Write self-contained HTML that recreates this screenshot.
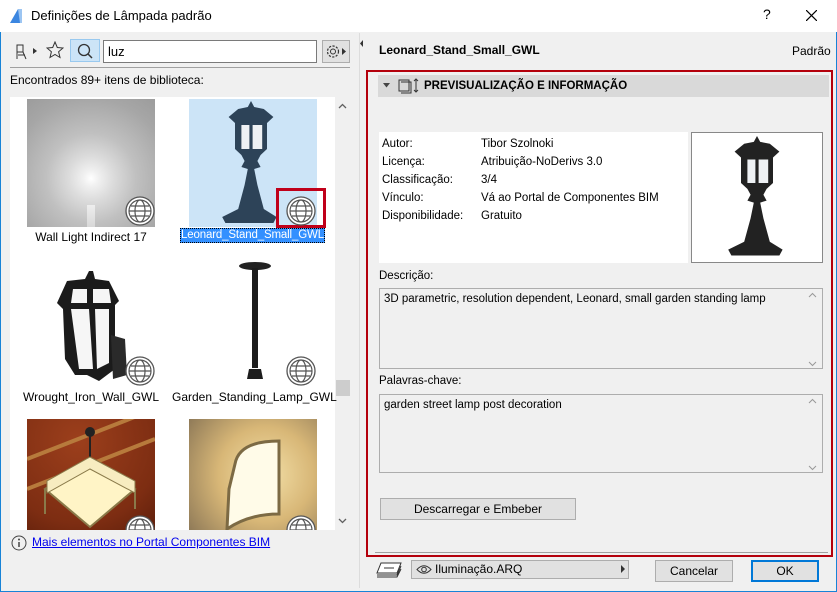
<!DOCTYPE html><html><head><meta charset="utf-8"><style>
*{box-sizing:border-box}body{margin:0;width:837px;height:592px;overflow:hidden;font-family:"Liberation Sans",sans-serif;font-size:12px;color:#000;background:#f0f0f0;position:relative}
.a{position:absolute}
.win{left:0;top:0;width:837px;height:592px;border:1px solid #1883d7;border-top:none}
.title{left:0;top:0;width:837px;height:32px;background:#fff}
.thumb{width:128px;height:128px}
.lbl{font-size:12px;text-align:center;width:162px}
.globe{width:30px;height:30px}
.btn{background:#e1e1e1;border:1px solid #adadad;text-align:center;font-size:12px}
.ta{background:#f0f0f0;border:1px solid #adadad;padding:4px;font-size:11.5px}
</style></head><body>
<div class="a win"></div>
<div class="a title"></div>
<svg class="a" style="left:9px;top:8px" width="14" height="16"><path d="M1 15 L9 1 L13 1 L13 15Z" fill="#3b86e0"/><path d="M9 1 L13 1 L13 15 L11 15Z" fill="#9cc5f2"/></svg>
<div class="a" style="left:31px;top:8px;font-size:13px">Definições de Lâmpada padrão</div>
<div class="a" style="left:763px;top:6px;font-size:14px">?</div>
<svg class="a" style="left:806px;top:10px" width="11" height="11"><path d="M0 0L11 11M11 0L0 11" stroke="#000" stroke-width="1.2"/></svg>
<svg class="a" style="left:15px;top:43px" width="24" height="18"><path d="M2 2 H8 V9 H2Z M2 9 V16 M8 9 L11 16 M3 12 H10" fill="none" stroke="#333" stroke-width="1"/><path d="M18 5 L22 8 L18 11Z" fill="#333"/></svg>
<svg class="a" style="left:46px;top:41px" width="18" height="18"><path d="M9 1 L11.3 6.5 L17 7 L12.6 10.8 L14 16.5 L9 13.5 L4 16.5 L5.4 10.8 L1 7 L6.7 6.5Z" fill="none" stroke="#333"/></svg>
<div class="a" style="left:70px;top:39px;width:30px;height:23px;background:#cce4f7;border:1px solid #99c9ef"></div>
<svg class="a" style="left:77px;top:43px" width="17" height="16"><circle cx="7" cy="7" r="5.5" fill="none" stroke="#333" stroke-width="1.3"/><path d="M11 11 L15 15" stroke="#333" stroke-width="1.5"/></svg>
<div class="a" style="left:103px;top:40px;width:214px;height:23px;background:#fff;border:1px solid #7a7a7a;padding:3px 4px;font-size:13px">luz</div>
<div class="a" style="left:322px;top:40px;width:28px;height:23px;background:#e1e1e1;border:1px solid #adadad"></div>
<svg class="a" style="left:325px;top:43px" width="24" height="18"><circle cx="8" cy="8.5" r="5.5" fill="none" stroke="#333" stroke-width="1.2" stroke-dasharray="2.2 1.4"/><circle cx="8" cy="8.5" r="2.5" fill="none" stroke="#333"/><path d="M17 5 L21 8.5 L17 12Z" fill="#333"/></svg>
<div class="a" style="left:10px;top:67px;width:340px;height:1px;background:#a0a0a0"></div>
<div class="a" style="left:10px;top:73px">Encontrados 89+ itens de biblioteca:</div>
<div class="a" style="left:10px;top:97px;width:325px;height:433px;background:#fff"></div>
<div class="a" style="left:335px;top:97px;width:15px;height:433px;background:#f0f0f0"></div>
<div class="a" style="left:336px;top:380px;width:14px;height:16px;background:#cdcdcd"></div>
<svg class="a" style="left:338px;top:103px" width="9" height="6"><path d="M1 5 L4.5 1.5 L8 5" fill="none" stroke="#606060" stroke-width="1.3"/></svg>
<svg class="a" style="left:338px;top:518px" width="9" height="6"><path d="M1 1 L4.5 4.5 L8 1" fill="none" stroke="#606060" stroke-width="1.3"/></svg>
<svg width="0" height="0" style="position:absolute"><defs>
<g id="lamp"><path d="M30 2 L32 8 L38 10 L44 18 L40 24 L40 50 L36 56 L34 62 L36 68 L32 70 L34 86 L38 110 L46 118 L44 124 L14 124 L12 118 L22 110 L26 86 L28 70 L24 68 L26 62 L24 56 L20 50 L20 24 L16 18 L22 10 L28 8Z"/><path d="M24 26 H29 V50 H24Z M31 26 H37 V50 H31Z" fill="#eef1f4"/></g>
<g id="g"><circle cx="15" cy="15" r="14" fill="#fff" stroke="#555" stroke-width="1.3"/><circle cx="15" cy="15" r="11" fill="none" stroke="#555" stroke-width="1.2"/><ellipse cx="15" cy="15" rx="5" ry="11" fill="none" stroke="#555" stroke-width="1.2"/><path d="M4 15 H26 M6 10 H24 M6 20 H24" stroke="#555" stroke-width="1.2"/></g></defs></svg>
<div class="a thumb" style="left:27px;top:99px;background:radial-gradient(circle at 50% 62%,#fff 0,#f0f0f0 8px,#dcdcdc 22px,#c0c0c0 45px,#a6a6a6 80px,#9c9c9c 100%)"></div>
<div class="a" style="left:87px;top:205px;width:8px;height:22px;background:linear-gradient(#eee,#d8d8d8)"></div>
<div class="a lbl" style="left:10px;top:230px">Wall Light Indirect 17</div>
<div class="a thumb" style="left:189px;top:99px;background:#cce4f7"></div>
<svg class="a" style="left:203px;top:99px" width="96" height="128"><g transform="translate(48 0) scale(1.6 1) translate(-30 0)" fill="#2d4358"><use href="#lamp"/></g></svg>
<div class="a" style="left:180px;top:228px;width:145px;height:15px;background:#3390ff;border:1px dotted #000"></div>
<div class="a" style="left:181px;top:229px;font-size:11.5px;letter-spacing:-0.15px;color:#fff;white-space:nowrap">Leonard_Stand_Small_GWL</div>
<div class="a" style="left:276px;top:188px;width:50px;height:40px;border:3px solid #c0001a"></div>
<svg class="a" style="left:27px;top:259px" width="128" height="128"><path d="M62 12 L66 12 L68 20 L82 22 L92 42 L88 46 L88 110 L72 122 L60 116 L48 116 L38 100 L36 50 L30 44 L40 22 L58 20Z" fill="#1b1b1b"/><path d="M44 50 H62 L66 110 H52Z M46 30 H60 V44 H44Z M66 30 H82 L84 44 H66Z M68 50 H82 L82 104 L70 110Z" fill="#f6f6f6"/><path d="M84 76 L98 80 L100 116 L86 120Z" fill="#2a2a2a"/></svg>
<div class="a lbl" style="left:10px;top:390px">Wrought_Iron_Wall_GWL</div>
<svg class="a" style="left:189px;top:259px" width="128" height="128"><ellipse cx="66" cy="7" rx="16" ry="4" fill="#222"/><rect x="63" y="9" width="6" height="100" fill="#1d1d1d"/><path d="M60 110 H72 L74 120 H58Z" fill="#1d1d1d"/></svg>
<div class="a lbl" style="left:172px;top:390px;width:162px">Garden_Standing_Lamp_GWL</div>
<div class="a" style="left:27px;top:419px;width:128px;height:111px;background:radial-gradient(circle at 40% 20%,#9c3f1c,#7d2d12 70%,#5e1f0b)"></div>
<svg class="a" style="left:27px;top:419px" width="128" height="111"><path d="M0 40 L128 -10 M0 70 L128 20" stroke="#b77a3c" stroke-width="4"/><path d="M63 14 V40" stroke="#222" stroke-width="2"/><circle cx="63" cy="13" r="5" fill="#222"/><path d="M63 40 L108 70 L63 108 L18 70Z M18 70 V95 M108 70 V90" fill="#fff4c6" stroke="#8a7a4a" stroke-width="2"/><path d="M20 62 L63 38 L108 62 L108 74 L63 50 L20 74Z" fill="#f7ecc0" stroke="#8a7a4a"/></svg>
<div class="a" style="left:189px;top:419px;width:128px;height:111px;background:radial-gradient(circle at 60% 50%,#f3e0a8,#d8b777 50%,#8f7a58)"></div>
<svg class="a" style="left:189px;top:419px" width="128" height="111"><path d="M46 45 Q50 22 90 22 L90 95 Q60 95 38 110 L40 70Z" fill="#fffbe8" stroke="#7c6a44" stroke-width="3"/></svg>
<svg class="a globe" style="left:125px;top:196px"><use href="#g"/></svg>
<svg class="a globe" style="left:286px;top:196px"><use href="#g"/></svg>
<svg class="a globe" style="left:125px;top:356px"><use href="#g"/></svg>
<svg class="a globe" style="left:286px;top:356px"><use href="#g"/></svg>
<div class="a" style="left:124px;top:515px;width:32px;height:15px;overflow:hidden"><svg width="30" height="30" style="margin-left:1px"><use href="#g"/></svg></div>
<div class="a" style="left:286px;top:515px;width:32px;height:15px;overflow:hidden"><svg width="30" height="30"><use href="#g"/></svg></div>
<svg class="a" style="left:11px;top:535px" width="16" height="16"><circle cx="8" cy="8" r="7" fill="none" stroke="#444"/><path d="M8 7 V12" stroke="#444" stroke-width="1.5"/><circle cx="8" cy="4.5" r="1" fill="#444"/></svg>
<div class="a" style="left:32px;top:535px;color:#00e;text-decoration:underline">Mais elementos no Portal Componentes BIM</div>
<div class="a" style="left:359px;top:33px;width:1px;height:555px;background:#dcdcdc"></div>
<svg class="a" style="left:360px;top:40px" width="4" height="7"><path d="M3 0 L0 3.5 L3 7Z" fill="#333"/></svg>
<div class="a" style="left:379px;top:43px;font-weight:bold">Leonard_Stand_Small_GWL</div>
<div class="a" style="left:792px;top:44px">Padrão</div>
<div class="a" style="left:366px;top:70px;width:467px;height:487px;border:2px solid #b4000c"></div>
<div class="a" style="left:378px;top:75px;width:451px;height:22px;background:#d9d9d9"></div>
<svg class="a" style="left:383px;top:83px" width="8" height="5"><path d="M0 0 H7 L3.5 4.5Z" fill="#444"/></svg>
<svg class="a" style="left:398px;top:78px" width="22" height="17"><rect x="1" y="2" width="10" height="11" fill="none" stroke="#333"/><path d="M3 4 H13 V15 H3" fill="none" stroke="#333"/><path d="M18 1 V14 M16 3 L18 1 L20 3 M16 12 L18 14 L20 12" fill="none" stroke="#333"/></svg>
<div class="a" style="left:424px;top:80px;font-weight:bold;font-size:11.5px">PREVISUALIZAÇÃO E INFORMAÇÃO</div>
<div class="a" style="left:379px;top:132px;width:309px;height:131px;background:#fff"></div>
<div class="a" style="left:382px;top:135px;line-height:18px;font-size:11.5px">Autor:<br>Licença:<br>Classificação:<br>Vínculo:<br>Disponibilidade:</div>
<div class="a" style="left:481px;top:135px;line-height:18px;font-size:11.5px">Tibor Szolnoki<br>Atribuição-NoDerivs 3.0<br>3/4<br>Vá ao Portal de Componentes BIM<br>Gratuito</div>
<div class="a" style="left:691px;top:132px;width:132px;height:131px;background:#fff;border:1px solid #888"></div>
<svg class="a" style="left:709px;top:134px" width="96" height="126"><g transform="translate(48 0) scale(1.6 0.98) translate(-30 0)" fill="#222"><use href="#lamp"/></g></svg>
<div class="a" style="left:379px;top:270px;font-size:11.5px">Descrição:</div>
<div class="a ta" style="left:379px;top:288px;width:444px;height:81px">3D parametric, resolution dependent, Leonard, small garden standing lamp</div>
<svg class="a" style="left:808px;top:292px" width="9" height="77"><path d="M1 5 L4.5 1.5 L8 5 M1 70 L4.5 73.5 L8 70" fill="none" stroke="#999"/></svg>
<div class="a" style="left:379px;top:375px;font-size:11.5px">Palavras-chave:</div>
<div class="a ta" style="left:379px;top:394px;width:444px;height:79px">garden street lamp post decoration</div>
<svg class="a" style="left:808px;top:398px" width="9" height="75"><path d="M1 5 L4.5 1.5 L8 5 M1 68 L4.5 71.5 L8 68" fill="none" stroke="#999"/></svg>
<div class="a btn" style="left:380px;top:498px;width:196px;height:22px;line-height:20px">Descarregar e Embeber</div>
<div class="a" style="left:375px;top:552px;width:453px;height:1px;background:#a0a0a0"></div>
<svg class="a" style="left:376px;top:562px" width="26" height="16"><path d="M5 1 H25 L21 11 H1Z" fill="#fff" stroke="#333"/><path d="M1 13 H21 L25 4 M1 15 H21 L25 7" fill="none" stroke="#333"/><path d="M8 6 H18" stroke="#333"/></svg>
<div class="a" style="left:411px;top:560px;width:218px;height:19px;background:#e1e1e1;border:1px solid #adadad"></div>
<svg class="a" style="left:416px;top:564px" width="16" height="11"><path d="M1 5.5 Q8 -2 15 5.5 Q8 13 1 5.5Z" fill="none" stroke="#333"/><circle cx="8" cy="5.5" r="2.3" fill="none" stroke="#333"/></svg>
<div class="a" style="left:435px;top:562px">Iluminação.ARQ</div>
<svg class="a" style="left:621px;top:565px" width="5" height="8"><path d="M0 0 L4 4 L0 8Z" fill="#333"/></svg>
<div class="a btn" style="left:655px;top:560px;width:78px;height:22px;line-height:20px">Cancelar</div>
<div class="a btn" style="left:751px;top:560px;width:68px;height:22px;line-height:18px;border:2px solid #0078d7">OK</div>
</body></html>
